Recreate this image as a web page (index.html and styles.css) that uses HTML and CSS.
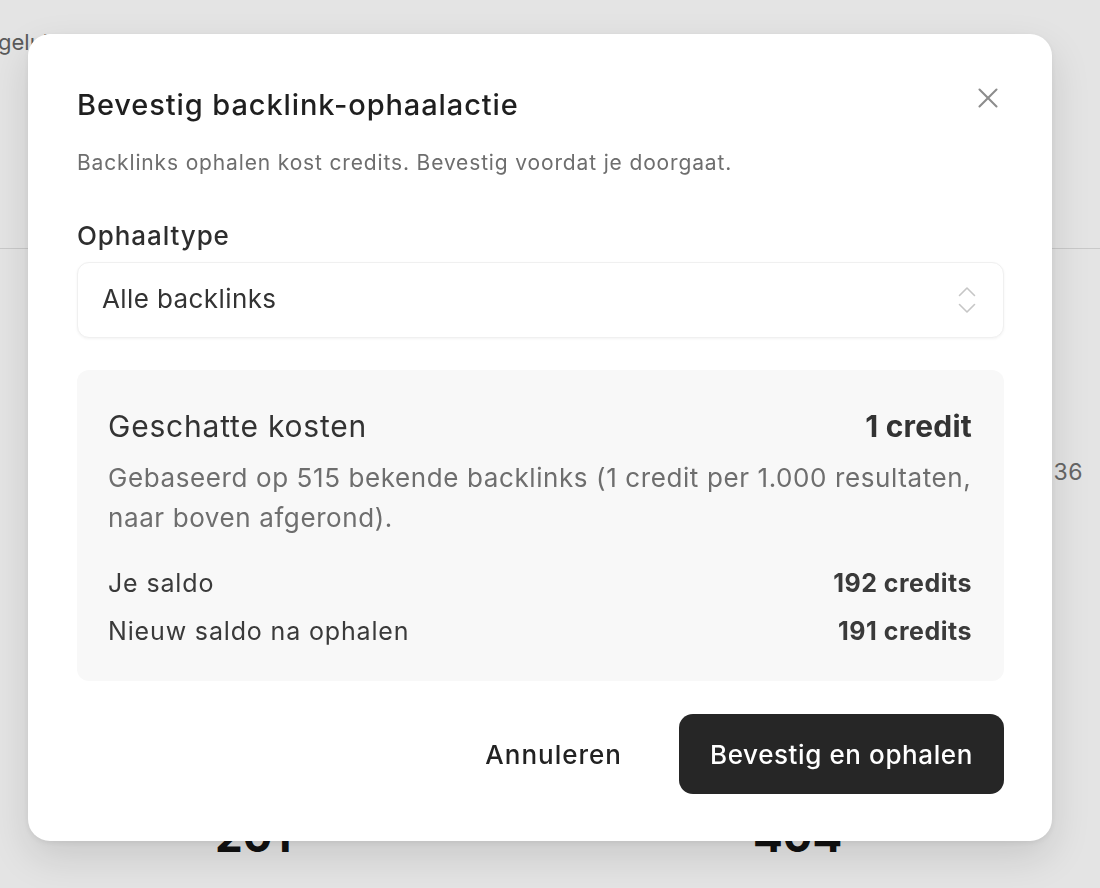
FILE: index.html
```html
<!DOCTYPE html>
<html lang="nl">
<head>
<meta charset="utf-8">
<title>Bevestig backlink-ophaalactie</title>
<link rel="stylesheet" href="styles.css">
</head>
<body>
<div class="page">
  <div class="page-top">
    <span class="page-status">gelukt</span>
  </div>
  <div class="page-divider"></div>
  <div class="page-side">
    <span class="side-num">36</span>
  </div>
  <div class="page-stats">
    <span class="stat">201</span>
    <span class="stat">404</span>
  </div>
</div>

<div class="overlay">
  <div class="modal" role="dialog" aria-labelledby="modal-title">
    <button class="close" aria-label="Sluiten">
      <svg width="20" height="20" viewBox="0 0 20 20" fill="none" stroke="currentColor" stroke-width="2" stroke-linecap="round"><path d="M1.5 1.5 L18.5 18.5 M18.5 1.5 L1.5 18.5"/></svg>
    </button>
    <h2 class="title" id="modal-title">Bevestig backlink-ophaalactie</h2>
    <p class="subtitle">Backlinks ophalen kost credits. Bevestig voordat je doorgaat.</p>

    <label class="field-label">Ophaaltype</label>
    <div class="select">
      <span class="select-value">Alle backlinks</span>
      <svg class="select-icon" width="18" height="28" viewBox="0 0 18 28" fill="none" stroke="currentColor" stroke-width="1.6" stroke-linecap="round" stroke-linejoin="round"><path d="M1.5 9.5 L9 2 L16.5 9.5"/><path d="M1.5 18.5 L9 26 L16.5 18.5"/></svg>
    </div>

    <div class="cost-box">
      <div class="cost-row">
        <span class="cost-label">Geschatte kosten</span>
        <span class="cost-value">1 credit</span>
      </div>
      <p class="cost-desc">Gebaseerd op 515 bekende backlinks (1 credit per 1.000 resultaten, naar boven afgerond).</p>
      <div class="balance">
        <div class="balance-row">
          <span>Je saldo</span>
          <span class="balance-value">192 credits</span>
        </div>
        <div class="balance-row">
          <span>Nieuw saldo na ophalen</span>
          <span class="balance-value">191 credits</span>
        </div>
      </div>
    </div>

    <div class="actions">
      <button class="btn btn-ghost">Annuleren</button>
      <button class="btn btn-primary">Bevestig en ophalen</button>
    </div>
  </div>
</div>
</body>
</html>
```

FILE: styles.css
```css
* { box-sizing: border-box; }

html, body {
  margin: 0;
  padding: 0;
  height: 100%;
}

body {
  font-family: Inter, "Noto Sans", sans-serif;
  background: #e4e4e4;
  overflow: hidden;
}

/* background page (dimmed) */
.page {
  height: 888px;
  display: flex;
  flex-direction: column;
}

.page-top {
  height: 248px;
  padding-top: 26px;
}

.page-status {
  display: block;
  margin-left: -2px;
  font-size: 22px;
  line-height: 32px;
  color: #5a5a5a;
}

.page-divider {
  height: 1px;
  background: #c9c9c9;
}

.page-side {
  display: flex;
  justify-content: flex-end;
  align-items: flex-start;
  padding-top: 207px;
  padding-right: 17px;
  height: 563px;
}

.side-num {
  font-size: 23px;
  line-height: 32px;
  letter-spacing: 0.5px;
  color: #666;
}

.page-stats {
  display: grid;
  grid-template-columns: 538px auto;
  padding-left: 215px;
}

.stat {
  font-size: 44px;
  font-weight: 700;
  line-height: 48px;
  color: #111;
}

/* modal */
.overlay {
  position: fixed;
  inset: 0;
  display: flex;
  align-items: flex-start;
  justify-content: flex-start;
  padding: 34px 0 0 28px;
}

.modal {
  position: relative;
  width: 1024px;
  background: #fff;
  border-radius: 22px;
  padding: 53px 48px 47px 49px;
  box-shadow: 0 16px 40px rgba(0, 0, 0, 0.12), 0 2px 6px rgba(0, 0, 0, 0.07);
}

.close {
  position: absolute;
  top: 54px;
  right: 54px;
  width: 20px;
  height: 20px;
  padding: 0;
  border: 0;
  background: none;
  color: #8c8c8c;
  display: flex;
}

.title {
  margin: 0;
  font-size: 29px;
  line-height: 36px;
  font-weight: 500;
  letter-spacing: 0.9px;
  color: #1f1f1f;
}

.subtitle {
  margin: 26px 0 0;
  font-size: 21px;
  line-height: 28px;
  letter-spacing: 0.85px;
  color: #6e6e6e;
}

.field-label {
  display: block;
  margin-top: 43px;
  font-size: 26px;
  line-height: 32px;
  font-weight: 500;
  letter-spacing: 0.9px;
  color: #2e2e2e;
}

.select {
  margin-top: 10px;
  height: 76px;
  border-radius: 12px;
  background: #fff;
  border: 1px solid #f0f0f0;
  box-shadow: 0 1px 3px rgba(0, 0, 0, 0.05);
  display: flex;
  align-items: center;
  justify-content: space-between;
  padding: 0 27px 4px 24px;
}

.select-value {
  font-size: 26px;
  letter-spacing: 0.4px;
  color: #333;
}

.select-icon {
  color: #c6c6c6;
  margin-top: 4px;
}

.cost-box {
  margin-top: 32px;
  background: #f8f8f8;
  border-radius: 12px;
  padding: 38px 32px 34px 31px;
}

.cost-row {
  display: flex;
  justify-content: space-between;
  align-items: baseline;
}

.cost-label {
  font-size: 30px;
  line-height: 36px;
  letter-spacing: 0.8px;
  color: #333;
}

.cost-value {
  font-size: 30px;
  line-height: 36px;
  font-weight: 700;
  letter-spacing: 0.2px;
  color: #333;
}

.cost-desc {
  margin: 14px 0 0;
  font-size: 26px;
  line-height: 40px;
  letter-spacing: 0.6px;
  color: #6e6e6e;
}

.balance {
  margin-top: 29px;
  display: flex;
  flex-direction: column;
  gap: 16px;
}

.balance-row {
  display: flex;
  justify-content: space-between;
  font-size: 25px;
  line-height: 32px;
  letter-spacing: 0.85px;
  color: #3a3a3a;
}

.balance-value {
  font-weight: 700;
  letter-spacing: 0.5px;
}

.actions {
  margin-top: 33px;
  display: flex;
  justify-content: flex-end;
  align-items: center;
  gap: 33px;
}

.btn {
  font-family: inherit;
  font-size: 26px;
  font-weight: 500;
  border: 0;
  cursor: pointer;
  height: 80px;
}

.btn-ghost {
  background: none;
  color: #222;
  padding: 0 24px;
  letter-spacing: 1px;
}

.btn-primary {
  background: #262626;
  color: #fff;
  width: 325px;
  border-radius: 14px;
  letter-spacing: 0.6px;
}
```
